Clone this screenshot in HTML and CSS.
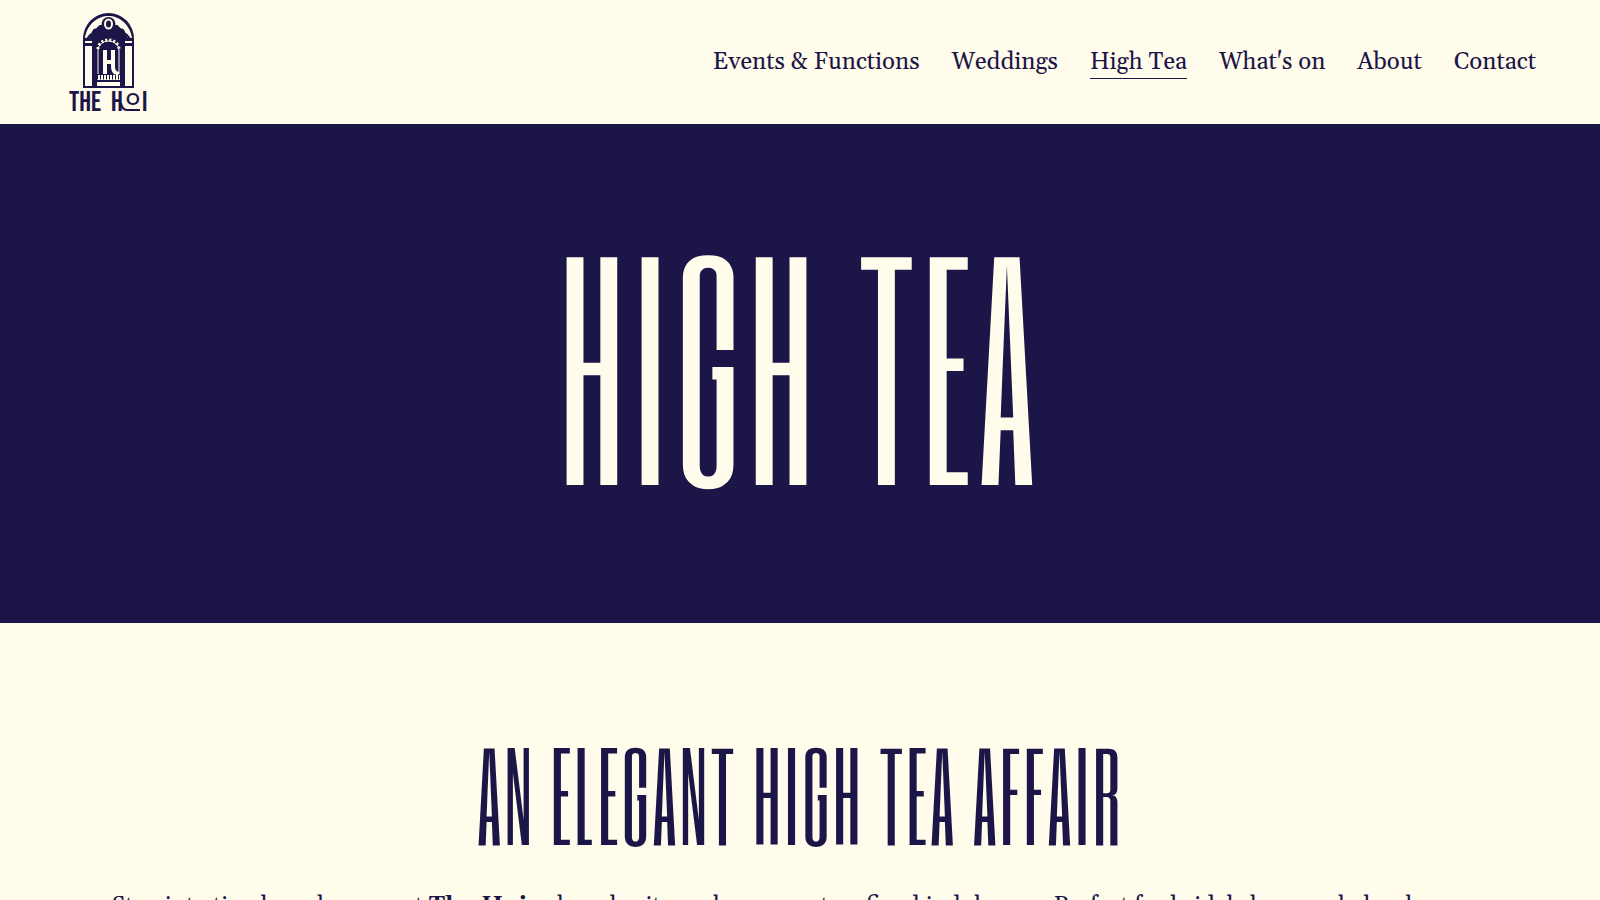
FILE: index.html
```html
<!DOCTYPE html>
<html lang="en">
<head>
  <meta charset="UTF-8" />
  <title>High Tea</title>
  <meta name="viewport" content="width=device-width, initial-scale=1" />
  <link rel="stylesheet" href="styles.css">
</head>
<body>
  <header class="site-header">
    <a href="#" class="logo" aria-label="The Hoi">
      <svg width="84" height="104" viewBox="0 0 84 104">
        <!-- outer arch and pillars -->
        <path class="fill" d="M16 78V29a25.500 26 0 0 1 51 0v49z"/>
        <path class="cut" d="M18 28C20 14 31 6 41.500 6S63 14 65 28H61L58 23 55 20 52 18 49 16 45 15H38L34 16 31 18 28 20 25 23 22 28z"/>
        <path class="cut" d="M18 31h7v2h-7zM58 31h7v2h-7zM18 36h7v40h-7zM58 36h7v40h-7z"/>
        <path class="line-dark" d="M20 29l3-4 2-1 2-4 3-1 3-3 3 0 2-3M63 29l-3-4-2-1-2-4-3-1-3-3-3 0-2-3"/>
        <circle class="fill" cx="41.500" cy="14" r="7"/>
        <ellipse class="cut" cx="41.500" cy="14" rx="4.500" ry="5.500"/>
        <ellipse class="fill" cx="41.500" cy="14" rx="2.500" ry="3.500"/>
        <!-- doorway -->
        <path class="line-light" d="M31 64V40a10.500 9 0 0 1 21 0v24"/>
        <path class="line-light dots" d="M31 39a10.500 9 0 0 1 21 0"/>
        <path class="line-light thick" d="M38 40v24M46 40v17q0 6 6 7M38 52h8"/>
        <path class="cut" d="M30 65h23v11H30z"/>
        <path class="line-dark dash" d="M30 67h23"/>
        <path class="line-dark" d="M30 71h23"/>
        <!-- name -->
        <g class="logo-name">
          <text x="2" y="101">THE</text>
          <text x="44" y="101">H</text>
          <text class="logo-o" x="59" y="95">O</text>
          <text x="75" y="101">I</text>
        </g>
        <path class="line-dark" d="M54 93q1 7 6 7h13"/>
      </svg>
    </a>
    <nav class="main-nav">
      <a href="#">Events &amp; Functions</a>
      <a href="#">Weddings</a>
      <a href="#" class="active">High Tea</a>
      <a href="#">What's on</a>
      <a href="#">About</a>
      <a href="#">Contact</a>
    </nav>
  </header>
  <main>
    <section class="hero">
      <h1>HIGH TEA</h1>
    </section>
    <section class="intro">
      <h2>AN ELEGANT HIGH TEA AFFAIR</h2>
      <p>Step into timeless elegance at <strong>The Hoi</strong>, where heritage charm meets refined indulgence. Perfect for bridal showers, baby showers,</p>
    </section>
  </main>
</body>
</html>
```

FILE: styles.css
```css
* {
  box-sizing: border-box;
}
body {
  margin: 0;
  background-color: #fffceb;
  color: #1c1548;
  font-family: Gelasio, Georgia, "Liberation Serif", serif;
  font-size: 24px;
  line-height: 32px;
}

.site-header {
  display: flex;
  justify-content: space-between;
  align-items: center;
  padding: 10px 4vw;
}
.logo {
  display: block;
  margin-left: 3px;
  height: 104px;
}
.logo svg {
  display: block;
}
.fill {
  fill: #1c1548;
}
.cut {
  fill: #fffceb;
}
.line-dark,
.line-light {
  fill: none;
  stroke: #1c1548;
  stroke-width: 2;
}
.line-light {
  stroke: #fffceb;
  stroke-width: 1;
}
.thick {
  stroke-width: 4;
}
.dots {
  stroke-width: 3;
  stroke-dasharray: 2 2;
}
.dash {
  stroke-width: 5;
  stroke-dasharray: 1 2;
}
.logo-name {
  fill: #1c1548;
  font-family: "Bebas Neue", "Roboto Condensed", sans-serif;
  font-size: 28px;
}
.logo-o {
  font-family: Lato, sans-serif;
  font-size: 17px;
  font-weight: bold;
}

.main-nav {
  display: flex;
  flex-wrap: wrap;
  gap: 32px;
}
.main-nav a {
  color: inherit;
  text-decoration: none;
  border-bottom: 1px solid transparent;
}
.main-nav .active {
  border-bottom-color: #1c1548;
}

h1,
h2 {
  margin: 0;
  font-family: "Six Caps", "Bebas Neue", "Roboto Condensed", sans-serif;
  font-weight: normal;
  letter-spacing: 0.02em;
}
.hero {
  display: flex;
  justify-content: center;
  padding: 111px 4vw 128px;
  background-color: #1c1548;
  color: #fffceb;
}
h1 {
  font-size: 270px;
  line-height: 260px;
}
.intro {
  padding: 111px 4vw 0;
  text-align: center;
}
h2 {
  font-size: 114px;
  line-height: 120px;
}
.intro p {
  max-width: 1400px;
  margin: 36px auto;
}
```
